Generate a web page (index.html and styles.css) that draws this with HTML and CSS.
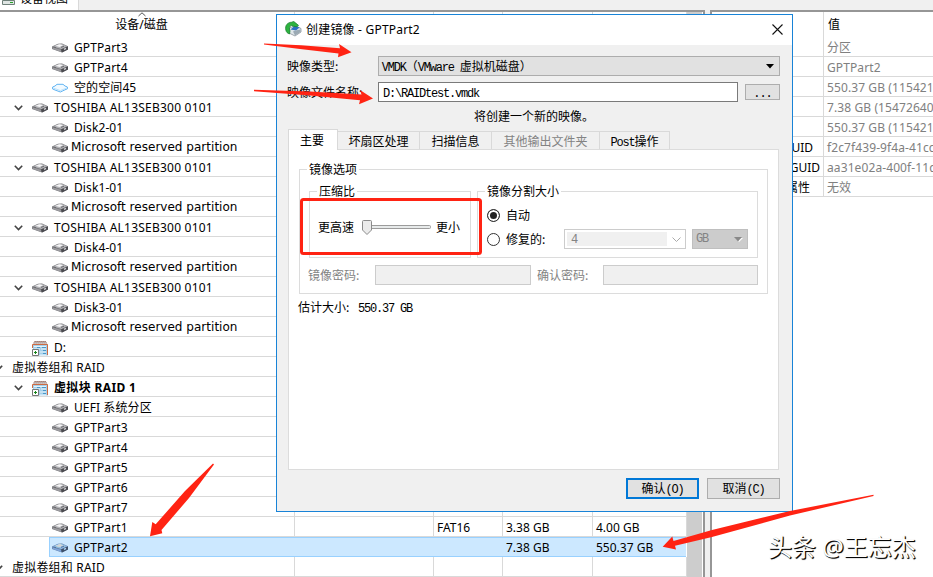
FILE: index.html
```
<!DOCTYPE html>
<html lang="zh-CN">
<head>
    <meta charset="UTF-8">
    <meta name="viewport" content="width=device-width, initial-scale=1.0">
    <title>创建镜像 - GPTPart2</title>
    <link rel="stylesheet" href="styles.css">
</head>
<body>

    <!-- Icon definitions -->
    <svg class="defs" width="0" height="0">
        <symbol id="disk" viewBox="0 0 16 10">
            <path d="M0 3.600 6 .8 10 .6 16 3.200v3.200L10 9.600 0 6z" fill="#77777b"/>
            <path d="M.6 3.500 6.500.9 10 .9l5.200 2.400L9.500 6z" fill="#b4b4b8"/>
            <path d="M3.500 2.800 7.500 1.300 11 2.300 7.500 4z" fill="#f6f6f7"/>
            <path d="M.5 4.200 9 6.800v2.200L.5 5.800z" fill="#9b9b9f"/>
            <path d="M9 6.400 16 3.400v3L10 9.600z" fill="#4b4b50"/>
            <path d="M12 6.300 14 5.400" stroke="#d8d8db" stroke-width="1.300"/>
            <path d="M1.500 3.800 4 4.700M9 4.400 12 3.200" stroke="#6a6a6e"/>
        </symbol>
        <symbol id="free" viewBox="0 0 16 10">
            <path d="M.6 4 3 3 5 1.300h6L13 3l2.400 1v1.800L13 6.800 8.400 9 3 7 .6 6z" fill="#f2faff" stroke="#61b4f2"/>
            <path d="M1.200 5 8.400 7.600 14.800 5" fill="none" stroke="#b9e0fb"/>
        </symbol>
        <symbol id="volume" viewBox="0 0 16 16">
            <path d="M1 4h15v11.500H1z" fill="#a5cfe9"/>
            <path d="M1 3.500 3 1h10.500L15.500 3.500z" fill="#c4cfd6"/>
            <path d="M2.500 1.500h11.500M1.500 3h13.500" stroke="#9b5b49" stroke-dasharray="1.200 .8"/>
            <path d="M.5 8V4.500h15V15" fill="none" stroke="#cf6a41"/>
            <path d="M2 6.500h12M2 9h6M9 9h5M8 12h6M8 15h6" stroke="#e6f4fc"/>
            <path d="M5 7.500h3M10 7.500h4M11 10.500h3M11 13.500h3" stroke="#4a97c9"/>
            <path d="M.5 9.500h6v6h-6z" fill="#fff" stroke="#777"/>
            <path d="M3.500 11v3M2 12.500h3" stroke="#17861c"/>
        </symbol>
        <symbol id="chevron" viewBox="0 0 9 6">
            <path d="M.8.8 4.500 4.500 8.200.8" fill="none" stroke="#444" stroke-width="1.600"/>
        </symbol>
    </svg>

    <div class="tab-strip">
        <div class="view-tab">
            <svg width="14" height="10" viewBox="0 0 14 10"><path d="M1 0h11v4H1z" fill="#a9d3ea"/><path d="M.5 4.500h12v4H.5z" fill="#dfe5e3" stroke="#6e8079"/><path d="M8 6.500h3" stroke="#28a428"/></svg>
            <span>设备视图</span>
        </div>
    </div>

    <div class="panes">
        <div class="tree-pane">
            <div class="tree">
                <div class="row head">
                    <div class="name">设备/磁盘<svg class="sort" width="8" height="5" viewBox="0 0 8 5"><path d="M.5 4 4 .8 7.500 4" fill="none" stroke="#555"/></svg></div><div></div><div></div><div></div><div></div>
                </div>
                <div class="row"><div class="name leaf"><svg class="disk"><use href="#disk"/></svg>GPTPart3</div><div></div><div></div><div></div><div></div></div>
                <div class="row"><div class="name leaf"><svg class="disk"><use href="#disk"/></svg>GPTPart4</div><div></div><div></div><div></div><div></div></div>
                <div class="row"><div class="name leaf"><svg class="disk"><use href="#free"/></svg>空的空间45</div><div></div><div></div><div></div><div></div></div>
                <div class="row"><div class="name drive"><svg class="chevron"><use href="#chevron"/></svg><svg class="disk"><use href="#disk"/></svg>TOSHIBA AL13SEB300 0101</div><div></div><div></div><div></div><div></div></div>
                <div class="row"><div class="name leaf"><svg class="disk"><use href="#disk"/></svg>Disk2-01</div><div></div><div></div><div></div><div></div></div>
                <div class="row"><div class="name leaf reserved"><svg class="disk"><use href="#disk"/></svg>Microsoft reserved partition</div><div></div><div></div><div></div><div></div></div>
                <div class="row"><div class="name drive"><svg class="chevron"><use href="#chevron"/></svg><svg class="disk"><use href="#disk"/></svg>TOSHIBA AL13SEB300 0101</div><div></div><div></div><div></div><div></div></div>
                <div class="row"><div class="name leaf"><svg class="disk"><use href="#disk"/></svg>Disk1-01</div><div></div><div></div><div></div><div></div></div>
                <div class="row"><div class="name leaf reserved"><svg class="disk"><use href="#disk"/></svg>Microsoft reserved partition</div><div></div><div></div><div></div><div></div></div>
                <div class="row"><div class="name drive"><svg class="chevron"><use href="#chevron"/></svg><svg class="disk"><use href="#disk"/></svg>TOSHIBA AL13SEB300 0101</div><div></div><div></div><div></div><div></div></div>
                <div class="row"><div class="name leaf"><svg class="disk"><use href="#disk"/></svg>Disk4-01</div><div></div><div></div><div></div><div></div></div>
                <div class="row"><div class="name leaf reserved"><svg class="disk"><use href="#disk"/></svg>Microsoft reserved partition</div><div></div><div></div><div></div><div></div></div>
                <div class="row"><div class="name drive"><svg class="chevron"><use href="#chevron"/></svg><svg class="disk"><use href="#disk"/></svg>TOSHIBA AL13SEB300 0101</div><div></div><div></div><div></div><div></div></div>
                <div class="row"><div class="name leaf"><svg class="disk"><use href="#disk"/></svg>Disk3-01</div><div></div><div></div><div></div><div></div></div>
                <div class="row"><div class="name leaf reserved"><svg class="disk"><use href="#disk"/></svg>Microsoft reserved partition</div><div></div><div></div><div></div><div></div></div>
                <div class="row"><div class="name letter"><svg class="volume"><use href="#volume"/></svg>D:</div><div></div><div></div><div></div><div></div></div>
                <div class="row"><div class="name group"><svg class="chevron"><use href="#chevron"/></svg>虚拟卷组和 RAID</div><div></div><div></div><div></div><div></div></div>
                <div class="row"><div class="name drive bold"><svg class="chevron"><use href="#chevron"/></svg><svg class="volume"><use href="#volume"/></svg>虚拟块 RAID 1</div><div></div><div></div><div></div><div></div></div>
                <div class="row"><div class="name leaf"><svg class="disk"><use href="#disk"/></svg>UEFI 系统分区</div><div></div><div></div><div></div><div></div></div>
                <div class="row"><div class="name leaf"><svg class="disk"><use href="#disk"/></svg>GPTPart3</div><div></div><div></div><div></div><div></div></div>
                <div class="row"><div class="name leaf"><svg class="disk"><use href="#disk"/></svg>GPTPart4</div><div></div><div></div><div></div><div></div></div>
                <div class="row"><div class="name leaf"><svg class="disk"><use href="#disk"/></svg>GPTPart5</div><div></div><div></div><div></div><div></div></div>
                <div class="row"><div class="name leaf"><svg class="disk"><use href="#disk"/></svg>GPTPart6</div><div></div><div></div><div></div><div></div></div>
                <div class="row"><div class="name leaf"><svg class="disk"><use href="#disk"/></svg>GPTPart7</div><div></div><div></div><div></div><div></div></div>
                <div class="row"><div class="name leaf"><svg class="disk"><use href="#disk"/></svg>GPTPart1</div><div></div><div>FAT16</div><div>3.38 GB</div><div>4.00 GB</div></div>
                <div class="row selected"><div class="name leaf"><svg class="disk"><use href="#disk"/></svg>GPTPart2</div><div></div><div></div><div>7.38 GB</div><div>550.37 GB</div></div>
                <div class="row"><div class="name group"><svg class="chevron"><use href="#chevron"/></svg>虚拟卷组和 RAID</div><div></div><div></div><div></div><div></div></div>
            </div>
            <div class="scrollbar"></div>
        </div>

        <div class="props-pane">
            <div class="prop head"><div></div><div>值</div></div>
            <div class="prop"><div></div><div>分区</div></div>
            <div class="prop"><div></div><div>GPTPart2</div></div>
            <div class="prop"><div></div><div>550.37 GB (115421</div></div>
            <div class="prop"><div></div><div>7.38 GB (15472640</div></div>
            <div class="prop"><div></div><div>550.37 GB (115421</div></div>
            <div class="prop"><div class="guid">GUID</div><div>f2c7f439-9f4a-41cc</div></div>
            <div class="prop"><div class="type-guid">GUID</div><div>aa31e02a-400f-11d</div></div>
            <div class="prop"><div class="attr">属性</div><div>无效</div></div>
        </div>
    </div>

    <!-- Create image dialog -->
    <div class="dialog">
        <div class="title-bar">
            <svg width="17" height="16" viewBox="0 0 17 16">
                <path d="M4.500 7 10 4.500l6 3v3.500l-6 4-6-3z" fill="#dfe6ea" stroke="#7b868e" stroke-width=".7"/>
                <path d="M5.500 8.500 10 4.500 14.500 6.500 11 9.500z" fill="#2b6fc4"/>
                <path d="M8 10.500 10.500 9.500 15.500 8.500v2.500l-5.500 3.500z" fill="#9ba9b3"/>
                <path d="M.8 9C-.2 4.500 2.500 1.200 7 1.200l1.500-.9 5 4-1.500 1.500-4-.6L6.500 4.500C4.500 5 4 7 5 10L4.500 13C2.200 12.200 1.200 11 .8 9z" fill="#2db33f" stroke="#157a2b" stroke-width=".7"/>
            </svg>
            <span class="title">创建镜像 - GPTPart2</span>
            <svg class="close" width="11" height="11" viewBox="0 0 11 11"><path d="M.5.5l10 10M10.500.5l-10 10" stroke="#111" stroke-width="1.100"/></svg>
        </div>

        <div class="dialog-body">
            <div class="field type-field">
                <label>映像类型<i>:</i></label>
                <div class="combo"><span><b>VMDK</b>（<b>VMware </b>虚拟机磁盘）</span><svg width="8" height="5" viewBox="0 0 8 5"><path d="M0 0h8L4 4.500z" fill="#000"/></svg></div>
            </div>
            <div class="field file-field">
                <label>映像文件名称<i>:</i></label>
                <div class="textbox"><b>D:\RAIDtest.vmdk</b></div>
                <div class="browse"><b>...</b></div>
            </div>
            <div class="hint">将创建一个新的映像。</div>

            <div class="tabs">
                <div class="tab active">主要</div>
                <div class="tab sectors">坏扇区处理</div>
                <div class="tab scan">扫描信息</div>
                <div class="tab output">其他输出文件夹</div>
                <div class="tab post"><b>Post</b>操作</div>
            </div>

            <div class="tab-page">
                <fieldset class="options">
                    <legend>镜像选项</legend>
                    <div class="option-groups">
                        <fieldset class="compression">
                            <legend>压缩比</legend>
                            <span>更高速</span>
                            <svg class="slider" width="72" height="16" viewBox="0 0 72 16">
                                <rect x="8.500" y="5.500" width="61" height="3" rx="1" fill="#e7eaea" stroke="#9c9c9c"/>
                                <path d="M1.500 1.500q0-1 1-1h7q1 0 1 1V10L6 14.500 1.500 10z" fill="#ebebeb" stroke="#8b8b8b"/>
                            </svg>
                            <span>更小</span>
                        </fieldset>
                        <fieldset class="split">
                            <legend>镜像分割大小</legend>
                            <div class="radio-row"><span class="radio checked"></span>自动</div>
                            <div class="radio-row">
                                <span class="radio"></span><span class="fixed">修复的<i>:</i></span>
                                <div class="size-combo"><span><b>4</b></span><svg width="9" height="5" viewBox="0 0 9 5"><path d="M.5.5l4 4 4-4" fill="none" stroke="#aaa"/></svg></div>
                                <div class="unit-combo"><b>GB</b><svg width="9" height="5" viewBox="0 0 9 5"><path d="M1 1h8L5 5z" fill="#fff"/><path d="M0 0h8L4 4.500z" fill="#888"/></svg></div>
                            </div>
                        </fieldset>
                    </div>
                    <div class="passwords">
                        <label>镜像密码<i>:</i></label><div class="password"></div>
                        <label class="confirm">确认密码<i>:</i></label><div class="password repeat"></div>
                    </div>
                </fieldset>
                <div class="estimate">估计大小<i>:</i><b> 550.37 GB</b></div>
            </div>

            <div class="buttons">
                <div class="button default">确认<b>(O)</b></div>
                <div class="button">取消<b>(C)</b></div>
            </div>
        </div>
    </div>

    <!-- Red markers drawn over the window -->
    <svg class="markers" width="933" height="577" viewBox="0 0 933 577">
        <rect x="301.500" y="199.500" width="179" height="54" rx="2" fill="none" stroke="#ff2313" stroke-width="3"/>
        <g fill="#ff2313">
            <path d="M264 43.500 301 45.200 340 48.200 339 44 351.500 52.300 338 57.300 338.500 53.500 300 49 264 44.500z"/>
            <path d="M254 89.800 310 91.500 361.500 94.500 360 90 373 98.500 359 104.300 360 100.200 310 95.500 254 91.200z"/>
            <path d="M213 463.500 214 464.500 189 498 161.500 530 162.300 533.300 150 536.300 152.300 522 155.700 524.300 185 491z"/>
            <path d="M873.500 494.800 873.500 496 790 515.500 712 537 675 545.800 676 549.600 662.700 546.700 672.300 536.500 673.500 541 712 530 790 511z"/>
        </g>
    </svg>

    <div class="watermark">头条 @王忘杰</div>

</body>
</html>
```
FILE: styles.css
```
* {
    box-sizing: border-box;
    margin: 0;
    padding: 0;
}

body {
    width: 933px;
    height: 577px;
    overflow: hidden;
    position: relative;
    background-color: #f0f0f0;
    font-family: "Noto Sans", "Noto Sans CJK SC", sans-serif;
    font-size: 12px;
    line-height: 19px;
    color: #000;
}

svg {
    display: block;
    flex: none;
}

.defs {
    position: absolute;
}

/* Top tab */
.tab-strip {
    height: 10px;
    overflow: hidden;
}

.view-tab {
    display: flex;
    width: 79px;
    height: 10px;
    padding-left: 2px;
    background-color: #fff;
    border-right: 1px solid #d9d9d9;
}

.view-tab svg {
    margin-top: -4px;
}

.view-tab span {
    margin: -11px 0 0 4px;
}

/* Panes */
.panes {
    display: flex;
    justify-content: space-between;
    height: 567px;
}

.tree-pane {
    display: flex;
    width: 705px;
    background-color: #fff;
    border-top: 2px solid #969696;
    border-right: 2px solid #969696;
}

.tree {
    width: 687px;
}

.scrollbar {
    width: 15px;
    background-color: #cdcdcd;
}

.row {
    display: grid;
    grid-template-columns: 295px 139px 69px 90px 94px;
    height: 20px;
    border-bottom: 1px solid #d9d9d9;
    white-space: nowrap;
}

.row > div {
    padding-top: 1px;
    padding-left: 3px;
    border-right: 1px solid #d9d9d9;
}

.row.head {
    height: 25px;
    border-bottom: none;
}

.row.head .name {
    position: relative;
    justify-content: center;
    padding-right: 14px;
    padding-top: 0;
}

.sort {
    position: absolute;
    left: 138px;
    top: 0;
}

.row .name {
    display: flex;
    align-items: center;
}

.disk {
    width: 16px;
    height: 10px;
    margin-right: 6px;
}

.volume {
    width: 16px;
    height: 16px;
    margin-right: 6px;
}

.chevron {
    width: 9px;
    height: 6px;
    margin-right: 9px;
}

.row .leaf {
    padding-left: 52px;
    letter-spacing: 0.1px;
}

.row .reserved {
    font-family: "DejaVu Sans", "Noto Sans", sans-serif;
    letter-spacing: 0.02px;
}

.reserved .disk {
    margin-right: 3px;
}

.row .drive {
    padding-left: 14px;
    letter-spacing: 0.22px;
}

.row .letter {
    padding-left: 32px;
}

.row .group {
    padding-left: 0;
    letter-spacing: 0.2px;
}

.group .chevron {
    margin: 0 9px 0 -6px;
}

.row .bold {
    font-weight: bold;
    letter-spacing: 0.35px;
}

.row.selected {
    grid-template-columns: 245px 139px 69px 90px 93px;
    margin-left: 49px;
    width: 637px;
    background-color: #cce8ff;
    border: 1px solid #99d1ff;
    border-right: none;
}

.row.selected > div {
    margin-top: -1px;
    border-right-color: transparent;
}

.row.selected .leaf {
    padding-left: 2px;
}

.row.selected .disk {
    filter: sepia(1) hue-rotate(175deg) saturate(1.6) brightness(0.85);
}

.props-pane {
    width: 223px;
    background-color: #fff;
    border-top: 2px solid #969696;
    border-left: 2px solid #969696;
    overflow: hidden;
}

.prop {
    display: grid;
    grid-template-columns: 112px 109px;
    height: 20px;
    border-bottom: 1px solid #d9d9d9;
    white-space: nowrap;
}

.prop > div {
    padding-top: 1px;
}

.prop > div:first-child {
    border-right: 1px solid #d9d9d9;
    text-align: right;
}

.prop > div:last-child {
    padding-left: 3px;
    color: #808080;
    letter-spacing: 0.1px;
}

.prop.head {
    height: 25px;
    border-bottom: none;
    line-height: 25px;
}

.prop.head > div:last-child {
    padding-top: 0;
    padding-left: 4px;
    color: #000;
}

.prop .guid {
    padding-right: 10px;
}

.prop .type-guid {
    padding-right: 3px;
}

.prop .attr {
    padding-right: 13px;
}

/* Dialog */
.dialog {
    position: absolute;
    left: 276px;
    top: 14px;
    width: 517px;
    height: 498px;
    background-color: #f0f0f0;
    border: 1px solid #1883d7;
    white-space: nowrap;
}

.title-bar {
    display: flex;
    align-items: center;
    height: 30px;
    padding: 0 9px 2px 8px;
    background-color: #fff;
}

.title {
    margin-left: 4px;
    letter-spacing: 0.2px;
}

.close {
    margin-left: auto;
}

.dialog-body {
    padding: 11px 12px 0 11px;
    font-family: "Noto Sans CJK SC", sans-serif;
    line-height: 18px;
}

/* Latin text keeps a 6px pitch next to 12px characters */
.dialog-body b {
    font-family: "Liberation Mono", monospace;
    font-size: 12px;
    font-weight: normal;
    letter-spacing: -1.2px;
    line-height: 1;
    white-space: pre;
}

.dialog-body i {
    display: inline-block;
    width: 6px;
    font-style: normal;
}

.field {
    display: flex;
    height: 20px;
}

.field label {
    width: 91px;
    padding-top: 1px;
    margin-left: -1px;
}

.field .combo {
    display: flex;
    justify-content: space-between;
    align-items: center;
    width: 403px;
    padding: 0 5px 0 3px;
    background-color: #e1e1e1;
    border: 1px solid #adadad;
}

.file-field {
    margin-top: 6px;
}

.textbox {
    width: 360px;
    padding-left: 4px;
    background-color: #fff;
    border: 1px solid #7a7a7a;
    line-height: 17px;
}

.browse {
    width: 35px;
    height: 16px;
    margin: 2px 0 0 7px;
    background-color: #e1e1e1;
    border: 1px solid #adadad;
    line-height: 13px;
    text-align: center;
}

.browse b {
    letter-spacing: -1px;
}

.hint {
    margin-top: 5px;
    text-align: center;
}

.tabs {
    display: flex;
    align-items: flex-end;
    height: 20px;
    margin-top: 4px;
}

.tab {
    height: 18px;
    background-color: #f0f0f0;
    border: 1px solid #d9d9d9;
    border-left: none;
    border-bottom: none;
    line-height: 17px;
    text-align: center;
}

.tab.active {
    position: relative;
    width: 50px;
    height: 21px;
    margin-bottom: -1px;
    padding-right: 2px;
    background-color: #fff;
    border-left: 1px solid #d9d9d9;
    line-height: 20px;
}

.sectors {
    width: 82px;
}

.scan {
    width: 72px;
}

.output {
    width: 108px;
    color: #838383;
}

.post {
    width: 70px;
}

.tab-page {
    width: 491px;
    height: 321px;
    padding: 10px 10px 0;
    background-color: #fff;
    border: 1px solid #dcdcdc;
}

fieldset {
    min-width: 0;
    border: 1px solid #dcdcdc;
}

legend {
    height: 18px;
    padding: 0 2px;
    margin-left: 7px;
}

.options {
    width: 469px;
    height: 134px;
}

.option-groups {
    display: flex;
    gap: 6px;
    margin: 4px 0 0 9px;
}

.compression {
    display: flex;
    align-items: center;
    width: 162px;
    height: 76px;
    padding-left: 8px;
    padding-bottom: 3px;
}

.compression legend {
    margin-left: -1px;
}

.slider {
    margin: 2px 3px 0 7px;
}

.split {
    width: 281px;
    height: 76px;
    padding-left: 9px;
}

.split legend {
    margin-left: -2px;
}

.radio-row {
    display: flex;
    align-items: center;
    height: 24px;
}

.radio-row:first-of-type {
    margin-top: 3px;
}

.radio {
    width: 13px;
    height: 13px;
    margin-right: 6px;
    background-color: #fff;
    border: 1px solid #333;
    border-radius: 50%;
}

.radio.checked {
    background-color: #222;
    box-shadow: inset 0 0 0 2px #fff;
}

.fixed {
    width: 58px;
}

.size-combo {
    display: flex;
    align-items: center;
    justify-content: space-between;
    width: 122px;
    height: 20px;
    padding: 0 4px 0 2px;
    border: 1px solid #ccc;
}

.size-combo span {
    width: 100px;
    height: 14px;
    padding-left: 4px;
    background-color: #f0f0f0;
    line-height: 12px;
    color: #838383;
}

.unit-combo {
    display: flex;
    align-items: center;
    justify-content: space-between;
    width: 56px;
    height: 20px;
    margin-left: 6px;
    padding: 0 4px 0 3px;
    background-color: #ccc;
    border: 1px solid #bfbfbf;
    color: #838383;
}

.passwords {
    display: flex;
    margin: 7px 0 0 8px;
    line-height: 19px;
    color: #838383;
}

.passwords label {
    width: 67px;
}

.passwords .confirm {
    width: 66px;
    margin-left: 6px;
}

.password {
    width: 156px;
    height: 20px;
    background-color: #f0f0f0;
    border: 1px solid #ccc;
}

.password.repeat {
    width: 155px;
}

.estimate {
    margin: 4px 0 0 -1px;
}

.buttons {
    display: flex;
    justify-content: flex-end;
    gap: 8px;
    margin-top: 8px;
}

.button {
    width: 73px;
    height: 21px;
    background-color: #e1e1e1;
    border: 1px solid #adadad;
    line-height: 18px;
    text-align: center;
}

.button.default {
    border: 2px solid #0078d7;
    line-height: 16px;
}

/* Overlays */
.markers {
    position: absolute;
    left: 0;
    top: 0;
}

.watermark {
    position: absolute;
    left: 768px;
    top: 530px;
    font-size: 24px;
    line-height: 34px;
    color: #fff;
    text-shadow: 1px 1px 1px #000, 1px 1px 0 #333;
    white-space: nowrap;
}
```
